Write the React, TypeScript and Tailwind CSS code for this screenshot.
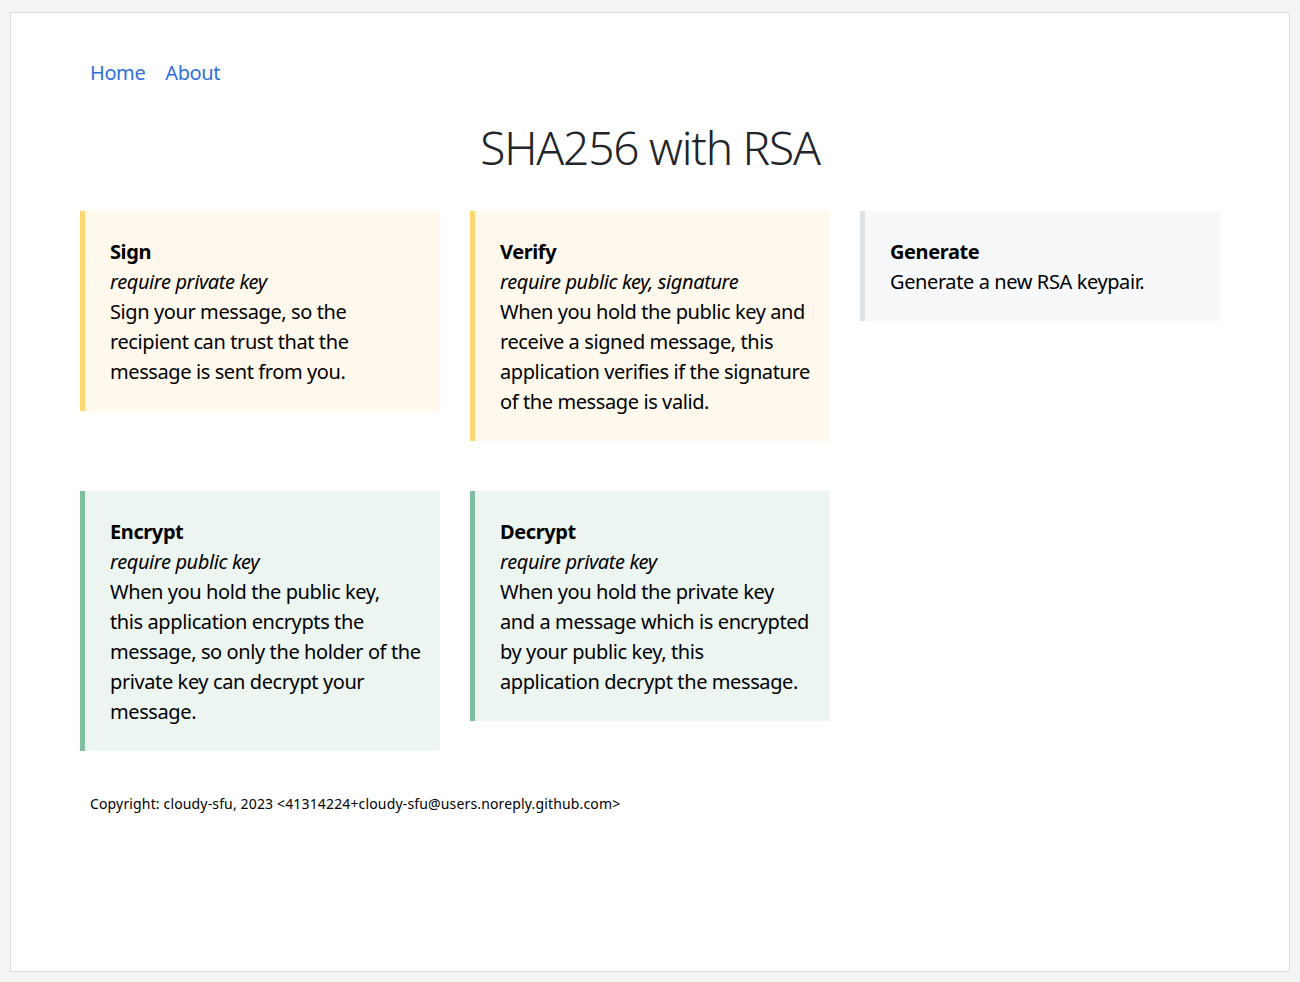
type Tone = 'warning' | 'success' | 'plain';

interface CardProps {
  title: string;
  requirement?: string;
  tone: Tone;
  /** Body text, one entry per rendered line */
  lines: string[];
}

const toneClass: Record<Tone, string> = {
  warning: 'bg-[#fff8ec] border-[#ffd970]',
  success: 'bg-[#edf5f0] border-[#7fbf9f]',
  plain: 'bg-[#f7f8fa] border-[#dee1e5]',
};

/**
 * One feature card, with a coloured bar down its left side
 */
function FeatureCard({ title, requirement, tone, lines }: CardProps) {
  return (
    <div
      className={`border-l-[5px] pl-[25px] pr-[20px] pt-[26px] pb-[24px] leading-[30px] tracking-[-0.4px] ${toneClass[tone]}`}
    >
      <div className="font-bold">{title}</div>
      {requirement && <div className="italic">{requirement}</div>}
      {lines.map((line) => (
        <div key={line} className="whitespace-nowrap">
          {line}
        </div>
      ))}
    </div>
  );
}

export default function App() {
  return (
    <div className="min-h-screen bg-[#f3f4f4] px-[10px] pt-[12px] pb-[10px] font-['Noto_Sans',sans-serif] text-[#212529]">
      <div className="h-[960px] border border-[#dcdddd] bg-white">
        <div className="mx-auto w-[1140px]">
          {/* Nav */}
          <nav className="flex pt-[45px] text-[20px] leading-[30px] tracking-[-0.4px] text-[#2f6fde]">
            <a href="#" className="px-[10px]">Home</a>
            <a href="#" className="px-[10px]">About</a>
          </nav>

          {/* Title */}
          <h1 className="mt-[30px] text-center text-[46px] font-light leading-[58px] tracking-[-1.2px]">
            SHA256 with RSA
          </h1>

          {/* Cards */}
          <div className="mt-[35px] grid grid-cols-3 items-start gap-x-[30px] gap-y-[50px] text-[20px] text-black">
            <FeatureCard
              title="Sign"
              requirement="require private key"
              tone="warning"
              lines={['Sign your message, so the', 'recipient can trust that the', 'message is sent from you.']}
            />
            <FeatureCard
              title="Verify"
              requirement="require public key, signature"
              tone="warning"
              lines={[
                'When you hold the public key and',
                'receive a signed message, this',
                'application verifies if the signature',
                'of the message is valid.',
              ]}
            />
            <FeatureCard title="Generate" tone="plain" lines={['Generate a new RSA keypair.']} />
            <FeatureCard
              title="Encrypt"
              requirement="require public key"
              tone="success"
              lines={[
                'When you hold the public key,',
                'this application encrypts the',
                'message, so only the holder of the',
                'private key can decrypt your',
                'message.',
              ]}
            />
            <FeatureCard
              title="Decrypt"
              requirement="require private key"
              tone="success"
              lines={[
                'When you hold the private key',
                'and a message which is encrypted',
                'by your public key, this',
                'application decrypt the message.',
              ]}
            />
          </div>

          {/* Footer */}
          <footer className="mt-[43px] px-[10px] text-[14px] leading-[20px] tracking-[0.15px] text-black">
            Copyright: cloudy-sfu, 2023 &lt;41314224+cloudy-sfu@users.noreply.github.com&gt;
          </footer>
        </div>
      </div>
    </div>
  );
}
